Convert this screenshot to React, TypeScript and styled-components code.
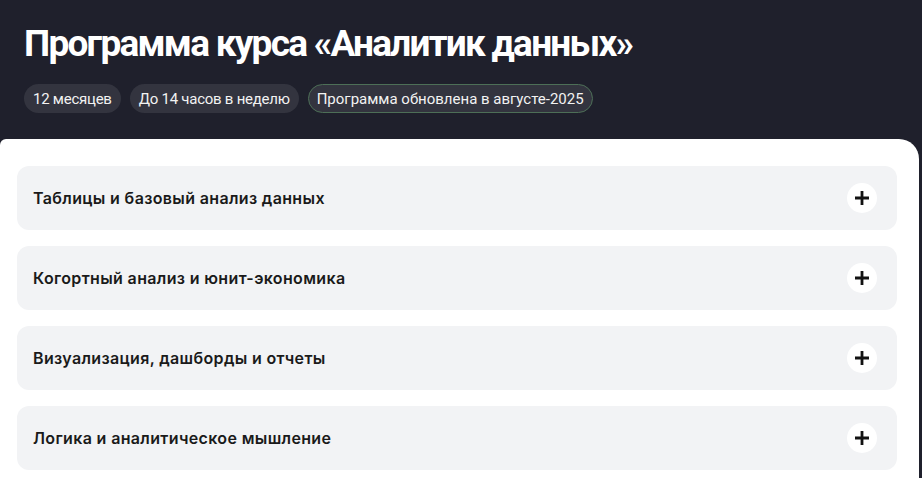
import React from "react";
import styled, { createGlobalStyle } from "styled-components";

const Global = createGlobalStyle`
  html, body { margin: 0; padding: 0; background: #1f202c; }
  body { font-family: Inter, "Noto Sans", sans-serif; overflow: hidden; }
  * { box-sizing: border-box; }
`;

const Page = styled.div`
  width: 922px;
  height: 478px;
  background: #1f202c;
  display: flex;
  flex-direction: column;
  overflow: hidden;
`;

const Header = styled.header`
  padding: 21px 24px 0;
  height: 139px;
  display: flex;
  flex-direction: column;
`;

const Title = styled.h1`
  margin: 0;
  font-family: Roboto, "Liberation Sans", sans-serif;
  font-weight: 700;
  font-size: 37px;
  line-height: 46px;
  color: #ffffff;
  letter-spacing: -1.75px;
`;

const Tags = styled.div`
  display: flex;
  gap: 9px;
  margin-top: 17px;
`;

const Tag = styled.span<{ $accent?: boolean }>`
  display: inline-flex;
  align-items: center;
  height: 29px;
  padding: 0 ${(p) => (p.$accent ? "8px" : "8px")};
  border-radius: 15px;
  background: #33343f;
  color: #f2f2f2;
  font-family: Roboto, "Liberation Sans", sans-serif;
  font-size: 15px;
  letter-spacing: ${(p) => (p.$accent ? "0" : "-0.25px")};
  border: 1px solid ${(p) => (p.$accent ? "#4d6f57" : "transparent")};
`;

const Panel = styled.main`
  flex: 1;
  width: 919px;
  background: #ffffff;
  border-radius: 6px 20px 0 0;
  padding: 27px 22px 0 17px;
  display: flex;
  flex-direction: column;
  gap: 16px;
`;

const Item = styled.div`
  height: 64px;
  background: #f2f3f5;
  border-radius: 12px;
  display: flex;
  align-items: center;
  justify-content: space-between;
  padding: 0 20px 0 16px;
`;

const ItemTitle = styled.span`
  font-size: 16px;
  font-weight: 600;
  letter-spacing: 0.35px;
  color: #1a1a1a;
`;

const PlusButton = styled.span`
  width: 30px;
  height: 30px;
  border-radius: 50%;
  background: #ffffff;
  display: flex;
  align-items: center;
  justify-content: center;
`;

const Plus = () => (
  <svg width="16" height="16" viewBox="0 0 16 16">
    <path d="M8 1v14M1 8h14" stroke="#111" strokeWidth="2.8" />
  </svg>
);

const modules = [
  "Таблицы и базовый анализ данных",
  "Когортный анализ и юнит-экономика",
  "Визуализация, дашборды и отчеты",
  "Логика и аналитическое мышление",
];

export default function App() {
  return (
    <Page>
      <Global />
      <Header>
        <Title>Программа курса «Аналитик данных»</Title>
        <Tags>
          <Tag>12 месяцев</Tag>
          <Tag>До 14 часов в неделю</Tag>
          <Tag $accent>Программа обновлена в августе-2025</Tag>
        </Tags>
      </Header>
      <Panel>
        {modules.map((m) => (
          <Item key={m}>
            <ItemTitle>{m}</ItemTitle>
            <PlusButton>
              <Plus />
            </PlusButton>
          </Item>
        ))}
      </Panel>
    </Page>
  );
}
